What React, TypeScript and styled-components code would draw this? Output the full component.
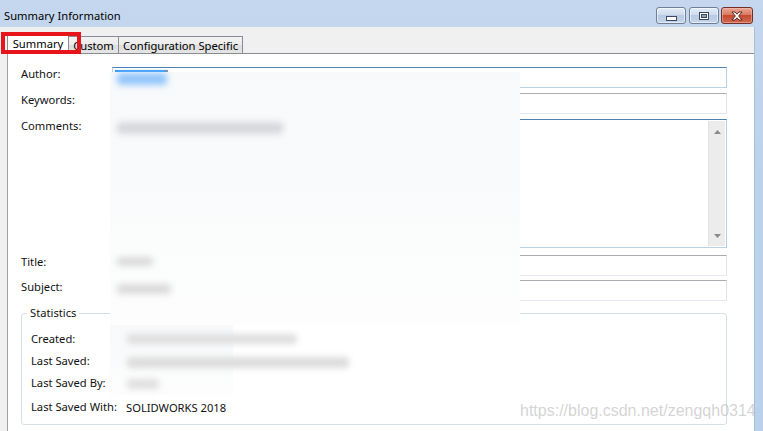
import React from "react";
import styled, { createGlobalStyle, css } from "styled-components";

const Global = createGlobalStyle`
  html, body { margin: 0; padding: 0; background: #fff; overflow: hidden; }
  body { font-family: "Noto Sans", "Open Sans", sans-serif; font-size: 11px; color: #000; }
  * { box-sizing: border-box; }
`;

const Window = styled.div`
  width: 763px;
  height: 431px;
  display: flex;
  flex-direction: column;
  background: linear-gradient(to bottom, #c4d7ee 0%, #bcd2eb 40%, #b9d1ea 100%);
  position: relative;
  overflow: hidden;
`;

const TitleBar = styled.div`
  height: 27px;
  display: flex;
  justify-content: space-between;
  align-items: flex-start;
  padding: 0 10px 0 4px;
  flex-shrink: 0;
`;

const TitleText = styled.span`
  margin-top: 8px;
  line-height: 16px;
  font-size: 11.2px;
  color: #000;
`;

const Controls = styled.div`
  display: flex;
  margin-top: 7px;
`;

const CtlButton = styled.div<{ $close?: boolean; $w: number; $ml: number }>`
  width: ${(p) => p.$w}px;
  height: 17px;
  margin-left: ${(p) => p.$ml}px;
  border: 1px solid #707f94;
  border-radius: 3px;
  display: flex;
  align-items: center;
  justify-content: center;
  box-shadow: inset 0 0 0 1px rgba(255, 255, 255, 0.55);
  background: linear-gradient(to bottom, #e3ecf7 0%, #cfdcee 45%, #b8cbe4 50%, #c3d4ea 100%);
  ${(p) =>
    p.$close &&
    css`
      border-color: #6e3027;
      box-shadow: inset 0 0 0 1px rgba(255, 200, 190, 0.45);
      background: linear-gradient(to bottom, #e9a896 0%, #d87a62 45%, #c7492f 50%, #cf6a52 100%);
    `}
`;

const Body = styled.div`
  flex: 1;
  display: flex;
  margin-right: 8px;
  border-right: 1px solid #a9bfd8;
`;

const Panel = styled.div`
  flex: 1;
  display: flex;
  flex-direction: column;
  background: #f0f0f0;
  position: relative;
`;

const TabStrip = styled.div`
  height: 26px;
  display: flex;
  align-items: flex-end;
  padding-left: 7px;
  flex-shrink: 0;
`;

const Tab = styled.div<{ $active?: boolean; $w: number }>`
  width: ${(p) => p.$w}px;
  display: flex;
  align-items: center;
  justify-content: center;
  border: 1px solid #898c95;
  border-bottom: none;
  font-size: 11.2px;
  white-space: nowrap;
  ${(p) =>
    p.$active
      ? css`
          height: 21px;
          margin-bottom: -1px;
          background: #fff;
          position: relative;
          z-index: 2;
          padding-bottom: 2px;
        `
      : css`
          height: 17px;
          margin-left: -1px;
          background: linear-gradient(to bottom, #f3f3f3 0%, #ebebeb 50%, #dddddd 51%, #e5e5e5 100%);
          padding-top: 1px;
        `}
`;

const Highlight = styled.div`
  position: absolute;
  left: 1px;
  top: 5px;
  width: 80px;
  height: 22px;
  border: 4px solid #e8141c;
  z-index: 5;
  pointer-events: none;
`;

const Content = styled.div`
  flex: 1;
  margin-left: 7px;
  border-left: 1px solid #a0a0a0;
  border-top: 1px solid #898c95;
  background: #fff;
  padding: 13px 27px 6px 13px;
  display: flex;
  flex-direction: column;
  position: relative;
`;

const FieldRow = styled.div<{ $mt: number }>`
  display: grid;
  grid-template-columns: 91px 1fr;
  margin-top: ${(p) => p.$mt}px;
`;

const Label = styled.label`
  line-height: 14px;
  font-size: 11.2px;
  color: #111;
  white-space: nowrap;
`;

const TextBox = styled.div<{ $focus?: boolean; $h: number }>`
  height: ${(p) => p.$h}px;
  background: #fff;
  border: 1px solid;
  border-color: ${(p) =>
    p.$focus ? "#4d80b3 #b5cfe7 #b7d4e6 #b5cfe7" : "#abadb3 #e2e3ea #e3e9ef #e2e3ea"};
  display: flex;
  justify-content: flex-end;
`;

const ScrollBar = styled.div`
  width: 17px;
  margin: 1px 1px 1px 0;
  background: #ececec;
  border-left: 1px solid #e2e2e2;
  display: flex;
  flex-direction: column;
  justify-content: space-between;
  align-items: center;
  padding: 9px 0 8px;
`;

const GroupBox = styled.fieldset`
  margin: 5px 0 0 0;
  padding: 8px 0 6px 9px;
  border: 1px solid #d5dfe5;
  border-radius: 3px;
  min-width: 0;
`;

const Legend = styled.legend`
  margin-left: -4px;
  padding: 0 3px;
  line-height: 14px;
  font-size: 11.2px;
  color: #111;
`;

const StatRow = styled.div<{ $mt?: number }>`
  display: grid;
  grid-template-columns: 95px 1fr;
  height: 22px;
  align-items: center;
  margin-top: ${(p) => p.$mt ?? 0}px;
`;

const StatValue = styled.span`
  font-size: 11.2px;
  color: #111;
`;

const Overlay = styled.div<{ $x: number; $y: number; $w: number; $h: number }>`
  position: absolute;
  left: ${(p) => p.$x}px;
  top: ${(p) => p.$y}px;
  width: ${(p) => p.$w}px;
  height: ${(p) => p.$h}px;
  background: linear-gradient(to bottom, #f7f9fb 0%, #f9fafb 40%, #fbfcfc 70%, #fdfdfd 100%);
  z-index: 3;
`;

const Blob = styled.div<{ $x: number; $y: number; $w: number; $h: number; $c: string }>`
  position: absolute;
  left: ${(p) => p.$x}px;
  top: ${(p) => p.$y}px;
  width: ${(p) => p.$w}px;
  height: ${(p) => p.$h}px;
  background: ${(p) => p.$c};
  filter: blur(3px);
  border-radius: 4px;
  z-index: 4;
`;

const SelBar = styled.div`
  position: absolute;
  left: 107px;
  top: 16px;
  width: 53px;
  height: 2px;
  background: #3399ff;
  border-right: 1px solid #e0803a;
  z-index: 4;
`;

const Watermark = styled.div`
  position: absolute;
  left: 520px;
  top: 402px;
  font-family: "Liberation Sans", Arial, sans-serif;
  font-size: 16px;
  line-height: 18px;
  color: rgba(175, 175, 175, 0.55);
  white-space: nowrap;
  z-index: 6;
`;

const ArrowUp = () => (
  <svg width="7" height="4" viewBox="0 0 7 4">
    <path d="M0 4 L3.5 0 L7 4 Z" fill="#8a8a8a" />
  </svg>
);
const ArrowDown = () => (
  <svg width="7" height="4" viewBox="0 0 7 4">
    <path d="M0 0 L3.5 4 L7 0 Z" fill="#8a8a8a" />
  </svg>
);

const MinGlyph = () => (
  <svg width="11" height="5" viewBox="0 0 11 5" style={{ marginTop: 6 }}>
    <rect x="0.5" y="0.5" width="10" height="4" fill="#fff" stroke="#3b4a5e" />
  </svg>
);
const MaxGlyph = () => (
  <svg width="10" height="8" viewBox="0 0 10 8">
    <rect x="0.5" y="0.5" width="9" height="7" fill="#fff" stroke="#3b4a5e" />
    <rect x="2.5" y="2.5" width="5" height="3" fill="#8aa2bf" stroke="#3b4a5e" />
  </svg>
);
const CloseGlyph = () => (
  <svg width="12" height="10" viewBox="0 0 12 10">
    <path
      d="M1 1 L4 1 L6 3.2 L8 1 L11 1 L7.6 5 L11 9 L8 9 L6 6.8 L4 9 L1 9 L4.4 5 Z"
      fill="#fff"
      stroke="#4a1d17"
      strokeWidth="0.9"
      strokeLinejoin="round"
    />
  </svg>
);

export default function App() {
  return (
    <>
      <Global />
      <Window>
        <TitleBar>
          <TitleText>Summary Information</TitleText>
          <Controls>
            <CtlButton $w={30} $ml={0}>
              <MinGlyph />
            </CtlButton>
            <CtlButton $w={30} $ml={3}>
              <MaxGlyph />
            </CtlButton>
            <CtlButton $w={32} $ml={2} $close>
              <CloseGlyph />
            </CtlButton>
          </Controls>
        </TitleBar>
        <Body>
          <Panel>
            <Highlight />
            <TabStrip>
              <Tab $active $w={62}>Summary</Tab>
              <Tab $w={51}>Custom</Tab>
              <Tab $w={125}>Configuration Specific</Tab>
            </TabStrip>
            <Content>
              <FieldRow $mt={0}>
                <Label>Author:</Label>
                <TextBox $focus $h={21} />
              </FieldRow>
              <FieldRow $mt={5}>
                <Label>Keywords:</Label>
                <TextBox $h={21} />
              </FieldRow>
              <FieldRow $mt={5}>
                <Label>Comments:</Label>
                <TextBox $focus $h={129}>
                  <ScrollBar>
                    <ArrowUp />
                    <ArrowDown />
                  </ScrollBar>
                </TextBox>
              </FieldRow>
              <FieldRow $mt={7}>
                <Label>Title:</Label>
                <TextBox $h={21} />
              </FieldRow>
              <FieldRow $mt={4}>
                <Label>Subject:</Label>
                <TextBox $h={21} />
              </FieldRow>
              <GroupBox>
                <Legend>Statistics</Legend>
                <StatRow>
                  <Label>Created:</Label>
                  <StatValue />
                </StatRow>
                <StatRow>
                  <Label>Last Saved:</Label>
                  <StatValue />
                </StatRow>
                <StatRow>
                  <Label>Last Saved By:</Label>
                  <StatValue />
                </StatRow>
                <StatRow $mt={2}>
                  <Label>Last Saved With:</Label>
                  <StatValue>SOLIDWORKS 2018</StatValue>
                </StatRow>
              </GroupBox>

              <SelBar />
              <Overlay $x={102} $y={18} $w={410} $h={253} />
              <Overlay $x={102} $y={271} $w={123} $h={70} />
              <Blob $x={109} $y={19} $w={50} $h={12} $c="#93c6fb" />
              <Blob $x={109} $y={68} $w={166} $h={12} $c="#d6d8db" />
              <Blob $x={109} $y={203} $w={36} $h={9} $c="#dadada" />
              <Blob $x={109} $y={230} $w={54} $h={10} $c="#dadada" />
              <Blob $x={119} $y={280} $w={170} $h={10} $c="#dedede" />
              <Blob $x={119} $y={303} $w={222} $h={11} $c="#dcdcdc" />
              <Blob $x={119} $y={325} $w={32} $h={10} $c="#dfdfdf" />
            </Content>
          </Panel>
        </Body>
        <Watermark>https://blog.csdn.net/zengqh0314</Watermark>
      </Window>
    </>
  );
}
